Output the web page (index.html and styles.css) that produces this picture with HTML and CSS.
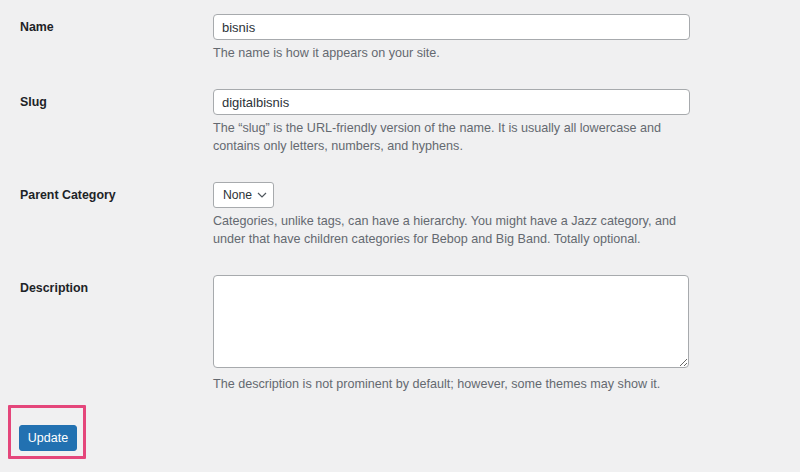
FILE: index.html
```html
<!DOCTYPE html>
<html lang="en">
<head>
    <meta charset="UTF-8">
    <meta name="viewport" content="width=device-width, initial-scale=1.0">
    <title>Edit Category</title>
    <link rel="stylesheet" href="styles.css">
</head>
<body>
    <form class="edit-form">
        <div class="form-row">
            <label for="name">Name</label>
            <div class="field">
                <input type="text" id="name" value="bisnis">
                <p class="description">The name is how it appears on your site.</p>
            </div>
        </div>

        <div class="form-row">
            <label for="slug">Slug</label>
            <div class="field">
                <input type="text" id="slug" value="digitalbisnis">
                <p class="description">The “slug” is the URL-friendly version of the name. It is usually all lowercase and contains only letters, numbers, and hyphens.</p>
            </div>
        </div>

        <div class="form-row">
            <label for="parent">Parent Category</label>
            <div class="field">
                <div class="select" id="parent">
                    <span>None</span>
                    <svg width="10" height="6" viewBox="0 0 10 6"><path d="M1 1l4 4 4-4" fill="none" stroke="#50575e" stroke-width="1.2"/></svg>
                </div>
                <p class="description">Categories, unlike tags, can have a hierarchy. You might have a Jazz category, and under that have children categories for Bebop and Big Band. Totally optional.</p>
            </div>
        </div>

        <div class="form-row last">
            <label for="description">Description</label>
            <div class="field">
                <textarea id="description"></textarea>
                <p class="description">The description is not prominent by default; however, some themes may show it.</p>
            </div>
        </div>

        <!-- highlighted submit button -->
        <div class="submit-box">
            <button type="button" class="update-btn">Update</button>
        </div>
    </form>
</body>
</html>
```

FILE: styles.css
```css
* {
    margin: 0;
    padding: 0;
    box-sizing: border-box;
}

body {
    font-family: "Liberation Sans", Arial, sans-serif;
    background: #f0f0f1;
    color: #1d2327;
    font-size: 13px;
}

.edit-form {
    padding-top: 14px;
}

.form-row {
    display: grid;
    grid-template-columns: 213px 477px;
    margin-bottom: 27px;
}

.form-row.last {
    margin-bottom: 12px;
}

.form-row label {
    padding-left: 20px;
    padding-top: 6px;
    font-weight: bold;
    font-size: 12.4px;
    color: #1d2327;
}

.field input[type="text"] {
    display: block;
    width: 477px;
    height: 26px;
    padding: 0 8px;
    border: 1px solid #a7aaad;
    border-radius: 4px;
    background: #fff;
    font-family: inherit;
    font-size: 13px;
    color: #2c3338;
    outline: none;
}

.description {
    margin-top: 4px;
    color: #646970;
    font-size: 12.6px;
    line-height: 18px;
}

.select {
    display: inline-flex;
    align-items: center;
    gap: 5px;
    height: 26px;
    padding: 0 6px 0 9px;
    border: 1px solid #a7aaad;
    border-radius: 3px;
    background: #fff;
    font-size: 12.2px;
    color: #2c3338;
}

.field textarea {
    display: block;
    width: 476px;
    height: 93px;
    border: 1px solid #a7aaad;
    border-radius: 4px;
    background: #fff;
    resize: vertical;
    outline: none;
}

.field textarea + .description {
    margin-top: 7px;
}

.submit-box {
    display: inline-block;
    margin-left: 8px;
    padding: 17px 6px 5px 8px;
    border: 3px solid #e4467b;
    border-radius: 1px;
}

.update-btn {
    display: block;
    width: 58px;
    height: 26px;
    background: #2271b1;
    color: #fff;
    border: 1px solid #2271b1;
    border-radius: 3px;
    font-family: inherit;
    font-size: 12.5px;
    cursor: pointer;
}
```
